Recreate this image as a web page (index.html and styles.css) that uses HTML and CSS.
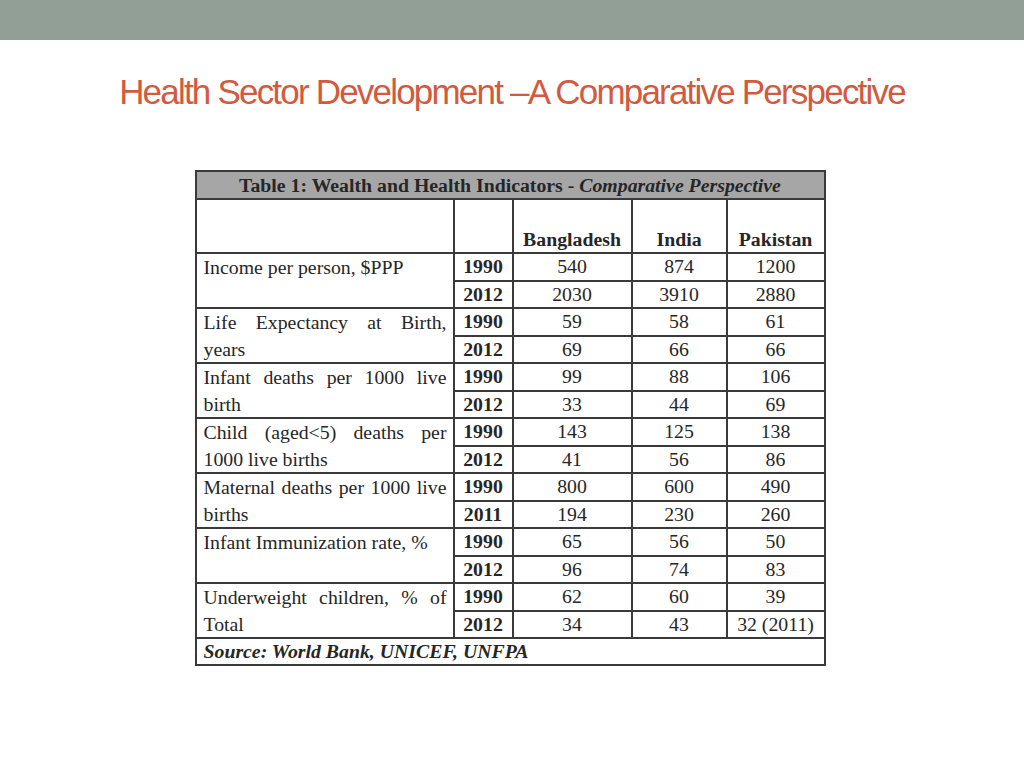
FILE: index.html
```html
<!DOCTYPE html>
<html>
<head>
<meta charset="utf-8">
<link rel="stylesheet" href="styles.css">
</head>
<body>
<div class="topbar"></div>
<h1 class="title">Health Sector Development –A Comparative Perspective</h1>
<div class="table-wrap">
<table class="data">
  <colgroup>
    <col class="c-label"><col class="c-year"><col class="c-bd"><col class="c-in"><col class="c-pk">
  </colgroup>
  <tr class="caption-row"><td colspan="5">Table 1: Wealth and Health Indicators - <i>Comparative Perspective</i></td></tr>
  <tr class="head-row"><td></td><td></td><th>Bangladesh</th><th>India</th><th>Pakistan</th></tr>
  <tr><td class="label" rowspan="2">Income per person, $PPP</td><td class="year">1990</td><td>540</td><td>874</td><td>1200</td></tr>
  <tr><td class="year">2012</td><td>2030</td><td>3910</td><td>2880</td></tr>
  <tr><td class="label" rowspan="2">Life Expectancy at Birth, years</td><td class="year">1990</td><td>59</td><td>58</td><td>61</td></tr>
  <tr><td class="year">2012</td><td>69</td><td>66</td><td>66</td></tr>
  <tr><td class="label" rowspan="2">Infant deaths per 1000 live birth</td><td class="year">1990</td><td>99</td><td>88</td><td>106</td></tr>
  <tr><td class="year">2012</td><td>33</td><td>44</td><td>69</td></tr>
  <tr><td class="label" rowspan="2">Child (aged&lt;5) deaths per 1000 live births</td><td class="year">1990</td><td>143</td><td>125</td><td>138</td></tr>
  <tr><td class="year">2012</td><td>41</td><td>56</td><td>86</td></tr>
  <tr><td class="label" rowspan="2">Maternal deaths per 1000 live births</td><td class="year">1990</td><td>800</td><td>600</td><td>490</td></tr>
  <tr><td class="year">2011</td><td>194</td><td>230</td><td>260</td></tr>
  <tr><td class="label" rowspan="2">Infant Immunization rate, %</td><td class="year">1990</td><td>65</td><td>56</td><td>50</td></tr>
  <tr><td class="year">2012</td><td>96</td><td>74</td><td>83</td></tr>
  <tr><td class="label" rowspan="2">Underweight children, % of Total</td><td class="year">1990</td><td>62</td><td>60</td><td>39</td></tr>
  <tr><td class="year">2012</td><td>34</td><td>43</td><td>32 (2011)</td></tr>
  <tr class="source-row"><td colspan="5">Source: World Bank, UNICEF, UNFPA</td></tr>
</table>
</div>
</body>
</html>
```
FILE: styles.css
```css
html, body {
  margin: 0;
  padding: 0;
  background: #ffffff;
}
.topbar {
  height: 40px;
  background: #919f96;
}
.title {
  margin: 32px 0 0 0;
  text-align: center;
  font-family: "Liberation Sans", Arial, sans-serif;
  font-weight: normal;
  font-size: 35px;
  letter-spacing: -1.8px;
  line-height: 40px;
  color: #d25a3e;
}
.table-wrap {
  display: flex;
  justify-content: center;
  padding-top: 58px;
  padding-right: 4px;
}
.data {
  border-collapse: collapse;
  font-family: "Liberation Serif", "Times New Roman", serif;
  font-size: 19.8px;
  color: #262626;
  table-layout: fixed;
  width: 629px;
  border: 2px solid #3a3a3a;
}
.c-label { width: 258px; }
.c-year { width: 59px; }
.c-bd { width: 119px; }
.c-in { width: 95px; }
.c-pk { width: 98px; }
.data td, .data th {
  border: 2px solid #3a3a3a;
  height: 25.5px;
  line-height: 25.5px;
  padding: 0 4px;
  text-align: center;
  vertical-align: middle;
}
.caption-row td {
  background: #a6a6a6;
  font-weight: bold;
  height: 26px;
  line-height: 26px;
}
.head-row td, .head-row th {
  height: 52px;
  vertical-align: bottom;
  font-weight: bold;
  padding-bottom: 0;
}
.data td.label {
  text-align: justify;
  vertical-align: top;
  padding: 0 6px 0 7px;
  line-height: 26.5px;
}
.data td.year {
  font-weight: bold;
}
.source-row td {
  text-align: left;
  font-weight: bold;
  font-style: italic;
  padding-left: 7px;
  height: 25px;
  line-height: 25px;
}
```
